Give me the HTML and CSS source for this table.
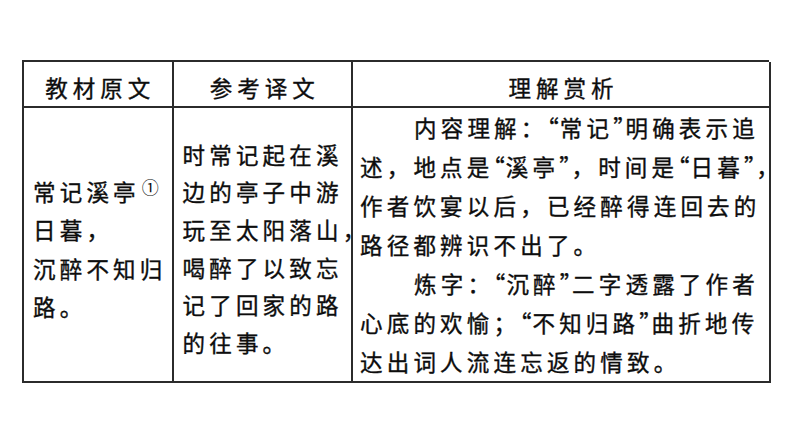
FILE: index.html
```html
<!DOCTYPE html>
<html lang="zh-CN">
<head>
<meta charset="utf-8">
<link rel="stylesheet" href="styles.css">
</head>
<body>
<div class="page">
  <div class="table">
    <div class="cell head c1">教材原文</div>
    <div class="cell head c2">参考译文</div>
    <div class="cell head c3">理解赏析</div>
    <div class="cell body c1">
      <div class="lines">
        <div>常记溪亭<sup class="note">①</sup></div>
        <div>日暮，</div>
        <div>沉醉不知归</div>
        <div>路。</div>
      </div>
    </div>
    <div class="cell body c2">
      <div class="lines">
        <div>时常记起在溪</div>
        <div>边的亭子中游</div>
        <div>玩至太阳落山<span class="tight">，</span></div>
        <div>喝醉了以致忘</div>
        <div>记了回家的路</div>
        <div>的往事。</div>
      </div>
    </div>
    <div class="cell body c3">
      <div class="lines">
        <div class="indent">内容理解：<span class="q">“</span>常记<span class="q">”</span>明确表示追</div>
        <div>述，地点是<span class="q">“</span>溪亭<span class="q">”</span>，时间是<span class="q">“</span>日暮<span class="q">”</span>，</div>
        <div>作者饮宴以后，已经醉得连回去的</div>
        <div>路径都辨识不出了。</div>
        <div class="indent">炼字：<span class="q">“</span>沉醉<span class="q">”</span>二字透露了作者</div>
        <div>心底的欢愉；<span class="q">“</span>不知归路<span class="q">”</span>曲折地传</div>
        <div>达出词人流连忘返的情致。</div>
      </div>
    </div>
  </div>
</div>
</body>
</html>
```
FILE: styles.css
```css
html, body {
  margin: 0;
  padding: 0;
  background: #ffffff;
}
body {
  width: 794px;
  height: 447px;
  overflow: hidden;
  font-family: "Noto Sans CJK SC", "Noto Sans", sans-serif;
  color: #0d0d0d;
}
.page {
  padding: 60px 0 0 22px;
}
.table {
  display: grid;
  grid-template-columns: 149.5px 179.5px 418px;
  grid-template-rows: 46px 275px;
  width: 747px;
  border-top: 2px solid #2b2b2b;
  border-left: 2px solid #2b2b2b;
  box-sizing: border-box;
}
.cell {
  border-right: 2px solid #2b2b2b;
  border-bottom: 2px solid #2b2b2b;
  display: flex;
  align-items: center;
  white-space: nowrap;
  box-sizing: border-box;
  -webkit-text-stroke: 0.35px #0d0d0d;
}
.head {
  justify-content: center;
  font-size: 22.5px;
  letter-spacing: 5px;
  padding-top: 6px;
  padding-left: 5px;
}
.body {
  font-size: 22.5px;
  letter-spacing: 4.2px;
  line-height: 37.6px;
}
.body.c1 {
  padding-left: 9px;
  padding-top: 8px;
  line-height: 38.2px;
}
.body.c2 {
  padding-left: 9px;
  padding-top: 8px;
}
.body.c3 {
  padding-left: 7px;
  padding-top: 0;
  line-height: 39px;
}
.indent {
  padding-left: 54px;
}
.note {
  font-size: 17px;
  -webkit-text-stroke: 0;
  letter-spacing: 0;
  vertical-align: 7px;
  line-height: 0;
  margin-left: 2px;
}
.tight {
  font-feature-settings: "halt" 1;
  letter-spacing: 0;
}
.q {
  font-feature-settings: "halt" 1;
  letter-spacing: 1px;
}
```
